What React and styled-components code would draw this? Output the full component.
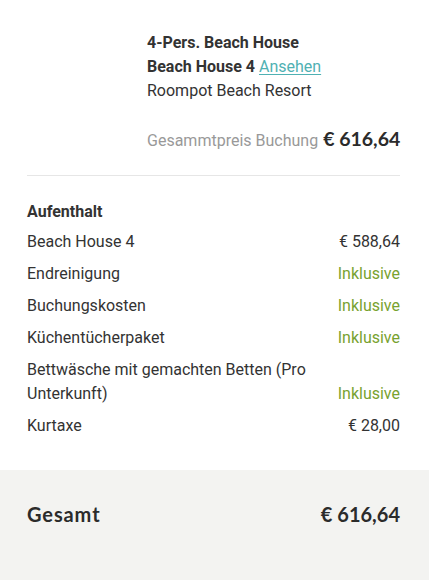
import React from "react";
import styled, { createGlobalStyle } from "styled-components";

const Global = createGlobalStyle`
  html, body { margin: 0; padding: 0; background: #fff; }
  body { font-family: Roboto, "Liberation Sans", sans-serif; color: #333; }
`;

const Page = styled.div`
  width: 429px;
  height: 580px;
  overflow: hidden;
  display: flex;
  flex-direction: column;
  background: #fff;
`;

const Body = styled.div`
  padding: 31px 29px 32px 27px;
`;

const Header = styled.div`
  display: grid;
  grid-template-columns: 120px 1fr;
`;

const Thumb = styled.div``;

const Info = styled.div`
  display: flex;
  flex-direction: column;
  font-size: 16px;
  line-height: 24px;
`;

const Title = styled.div`
  font-weight: 700;
  color: #333;
`;

const Link = styled.a`
  font-weight: 400;
  color: #4fb1b3;
  text-decoration: underline;
  text-underline-offset: 2px;
`;

const Plain = styled.div`
  color: #333;
`;

const PriceLine = styled.div`
  margin-top: 24px;
  display: flex;
  align-items: baseline;
  justify-content: flex-end;
  gap: 5px;
  white-space: nowrap;
`;

const PriceLabel = styled.span`
  color: #999;
  font-size: 16px;
`;

const BigPrice = styled.span`
  font-family: Lato, "Noto Sans", sans-serif;
  font-weight: 700;
  font-size: 19.5px;
  color: #2b2b2b;
`;

const Divider = styled.hr`
  border: 0;
  border-top: 1px solid #e6e6e6;
  margin: 22px 0 0;
`;

const Section = styled.div`
  margin-top: 24px;
  display: flex;
  flex-direction: column;
  gap: 8px;
  font-size: 16px;
  line-height: 24px;
`;

const SectionTitle = styled.div`
  font-weight: 700;
  margin-bottom: -2px;
`;

const Row = styled.div`
  display: flex;
  justify-content: space-between;
  align-items: flex-end;
  gap: 24px;
`;

const Label = styled.span`
  color: #333;
  max-width: 290px;
`;

const Value = styled.span`
  white-space: nowrap;
  color: ${(p) => (p.$green ? "#78a22f" : "#333")};
`;

const Footer = styled.div`
  flex: 1;
  background: #f3f3f1;
  padding: 31px 29px 0 27px;
  display: flex;
  justify-content: space-between;
  align-items: flex-start;
  font-family: Lato, "Noto Sans", sans-serif;
  font-weight: 700;
  font-size: 20px;
  line-height: 26px;
  color: #2b2b2b;
`;

const FooterText = styled.span`
  letter-spacing: ${(p) => (p.$wide ? "0.9px" : "0")};
`;

const rows = [
  ["Beach House 4", "€ 588,64", false],
  ["Endreinigung", "Inklusive", true],
  ["Buchungskosten", "Inklusive", true],
  ["Küchentücherpaket", "Inklusive", true],
  ["Bettwäsche mit gemachten Betten (Pro Unterkunft)", "Inklusive", true],
  ["Kurtaxe", "€ 28,00", false],
];

export default function App() {
  return (
    <>
      <Global />
      <Page>
        <Body>
          <Header>
            <Thumb />
            <Info>
              <Title>4-Pers. Beach House</Title>
              <Title>
                Beach House 4 <Link href="#">Ansehen</Link>
              </Title>
              <Plain>Roompot Beach Resort</Plain>
              <PriceLine>
                <PriceLabel>Gesammtpreis Buchung</PriceLabel>
                <BigPrice>€ 616,64</BigPrice>
              </PriceLine>
            </Info>
          </Header>
          <Divider />
          <Section>
            <SectionTitle>Aufenthalt</SectionTitle>
            {rows.map(([l, v, g]) => (
              <Row key={l}>
                <Label>{l}</Label>
                <Value $green={g}>{v}</Value>
              </Row>
            ))}
          </Section>
        </Body>
        <Footer>
          <FooterText $wide>Gesamt</FooterText>
          <FooterText>€ 616,64</FooterText>
        </Footer>
      </Page>
    </>
  );
}
